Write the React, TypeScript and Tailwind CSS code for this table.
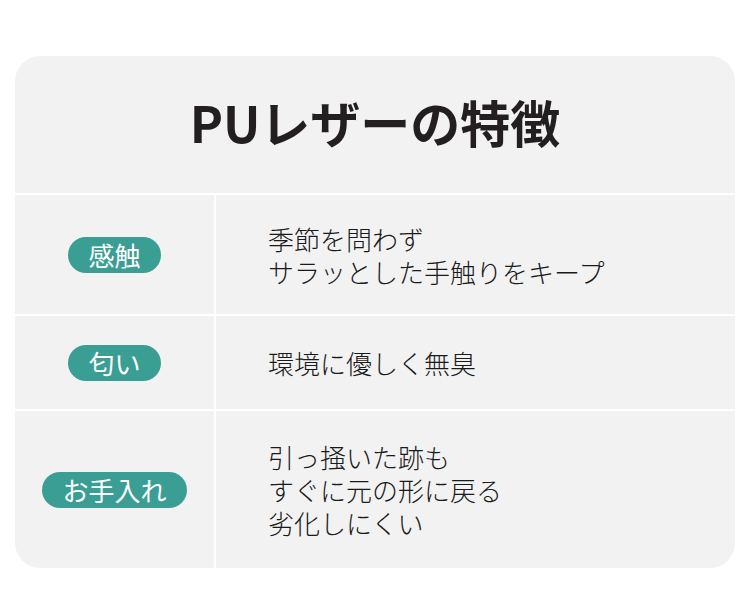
import React from "react";

const font = { fontFamily: '"Noto Sans CJK JP", "Noto Sans", sans-serif' };

const rows: { label: string; lines: string[]; h: string }[] = [
  { label: "感触", lines: ["季節を問わず", "サラッとした手触りをキープ"], h: "h-[119px]" },
  { label: "匂い", lines: ["環境に優しく無臭"], h: "h-[93px]" },
  { label: "お手入れ", lines: ["引っ掻いた跡も", "すぐに元の形に戻る", "劣化しにくい"], h: "h-[157px]" },
];

export default function App() {
  return (
    <div className="w-[750px] h-[589px] bg-white pt-[56px] px-[15px]" style={font}>
      <div className="w-[720px] rounded-[25px] overflow-hidden flex flex-col gap-[2px] bg-white">
        <div className="h-[137px] bg-[#f2f2f2] flex items-center justify-center">
          <h1 className="text-[50px] font-bold text-[#231f20] leading-none -mt-[8px]">PUレザーの特徴</h1>
        </div>
        {rows.map((r) => (
          <div key={r.label} className={`grid grid-cols-[199px_1fr] gap-[2px] ${r.h}`}>
            <div className="bg-[#f2f2f2] flex items-center justify-center">
              <span className="bg-[#3a9e94] text-white rounded-full h-[36px] px-[20px] flex items-center text-[26px] leading-none">
                {r.label}
              </span>
            </div>
            <div className="bg-[#f2f2f2] flex items-center pl-[52px]">
              <p className="text-[26px] leading-[33px] text-[#1a1a1a] font-light">
                {r.lines.map((l, i) => (
                  <React.Fragment key={l}>
                    {i > 0 && <br />}
                    {l}
                  </React.Fragment>
                ))}
              </p>
            </div>
          </div>
        ))}
      </div>
    </div>
  );
}
